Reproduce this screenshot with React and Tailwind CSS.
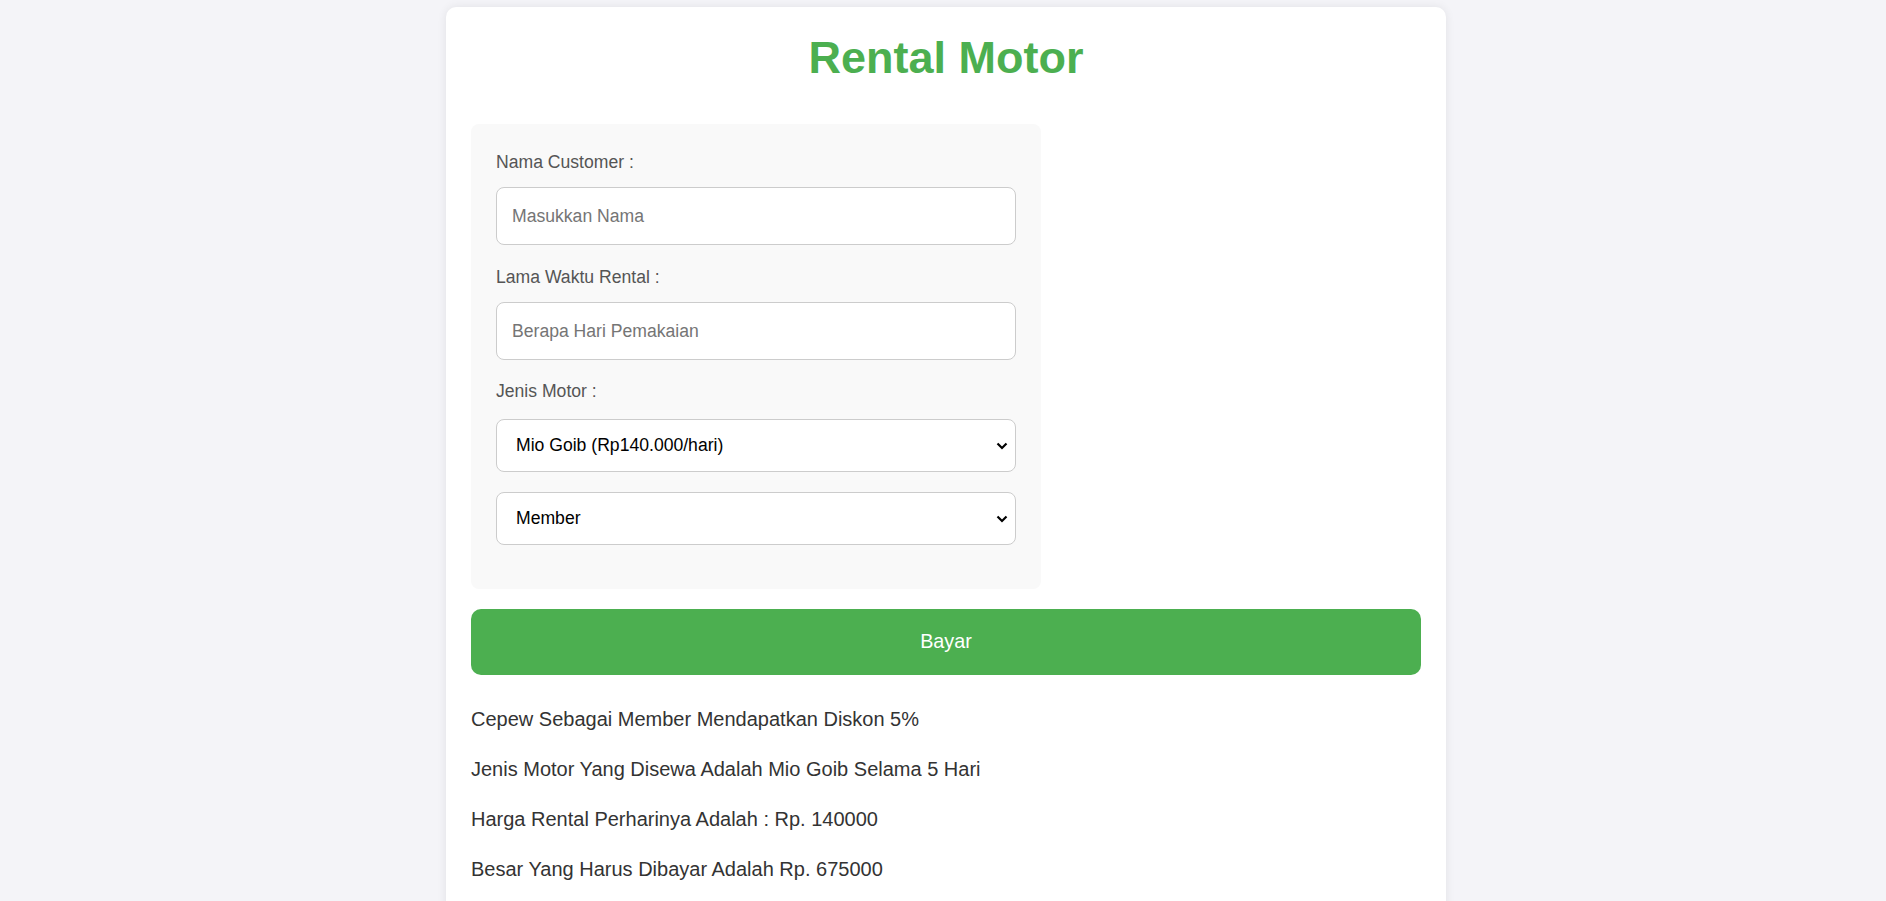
import React from 'react';

const font = { fontFamily: '"Liberation Sans", Arial, sans-serif' };

const Chevron = () => (
    <svg className="pointer-events-none absolute right-[8px] top-1/2 -translate-y-1/2" width="12" height="9" viewBox="0 0 12 9">
        <path d="M1.5 2 L6 6.5 L10.5 2" fill="none" stroke="#000" strokeWidth="2.2" />
    </svg>
);

const Field = ({ label, placeholder, className }) => (
    <div className={className}>
        <label className="block text-[17.6px] leading-[20px] text-[#555] mb-[15px]">{label}</label>
        <input
            type="text"
            placeholder={placeholder}
            className="block w-full h-[58px] px-[15px] text-[17.6px] bg-white border border-[#ccc] rounded-[8px] outline-none placeholder:text-[#757575]"
        />
    </div>
);

const Select = ({ options, className }) => (
    <div className={`relative ${className}`}>
        <select className="block w-full h-[53px] pl-[19px] pr-[36px] text-[17.6px] text-black bg-white border border-[#ccc] rounded-[8px] outline-none appearance-none">
            {options.map((o) => (
                <option key={o}>{o}</option>
            ))}
        </select>
        <Chevron />
    </div>
);

const results = [
    'Cepew Sebagai Member Mendapatkan Diskon 5%',
    'Jenis Motor Yang Disewa Adalah Mio Goib Selama 5 Hari',
    'Harga Rental Perharinya Adalah : Rp. 140000',
    'Besar Yang Harus Dibayar Adalah Rp. 675000',
];

const App = () => (
    <div className="min-h-screen bg-[#f4f4f8] pt-[7px] pl-[6px]" style={font}>
        <div className="w-[1000px] mx-auto bg-white rounded-[10px] shadow-[0_0_10px_rgba(0,0,0,0.08)] px-[25px] pt-[26px] pb-[25px]">
            <h1 className="text-center text-[45px] leading-[50px] font-bold text-[#4CAF50]">Rental Motor</h1>

            <div className="w-[570px] mt-[41px] bg-[#f9f9f9] rounded-[8px] px-[25px] pt-[28px] pb-[44px]">
                <Field label="Nama Customer :" placeholder="Masukkan Nama" />
                <Field className="mt-[22px]" label="Lama Waktu Rental :" placeholder="Berapa Hari Pemakaian" />
                <label className="block mt-[21px] text-[17.6px] leading-[20px] text-[#555] mb-[18px]">Jenis Motor :</label>
                <Select options={['Mio Goib (Rp140.000/hari)', 'Beat (Rp100.000/hari)', 'Vario (Rp120.000/hari)']} />
                <Select className="mt-[20px]" options={['Member', 'Non Member']} />
            </div>

            <button className="w-full h-[66px] mt-[20px] rounded-[10px] bg-[#4CAF50] text-white text-[19.8px]">Bayar</button>

            <div className="mt-[19px]">
                {results.map((r) => (
                    <p key={r} className="text-[20px] leading-[50px] text-[#333]">{r}</p>
                ))}
            </div>
        </div>
    </div>
);

export default App;
